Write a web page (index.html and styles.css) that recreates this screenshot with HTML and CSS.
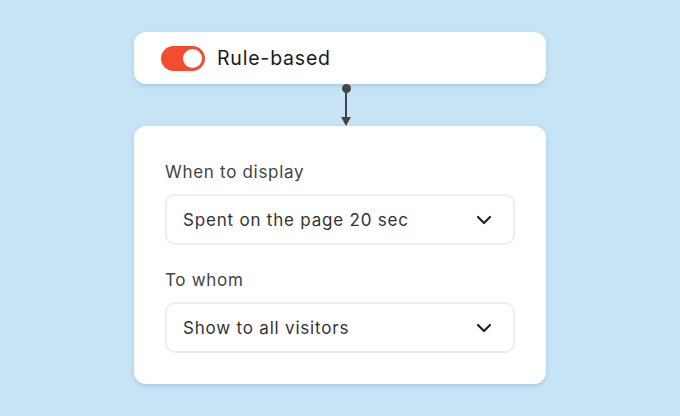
FILE: index.html
```html
<!DOCTYPE html>
<html>
<head>
<meta charset="utf-8">
<link rel="stylesheet" href="styles.css">
</head>
<body>
<div class="stage">
  <div class="card top">
    <span class="toggle"><span class="knob"></span></span>
    <span class="title">Rule-based</span>
  </div>
  <div class="connector">
    <span class="dot"></span>
    <span class="line"></span>
    <span class="head"></span>
  </div>
  <div class="card panel">
    <div class="label">When to display</div>
    <div class="select">
      <span>Spent on the page 20 sec</span>
      <svg class="chev" width="16" height="10" viewBox="0 0 16 10"><path d="M2 2 L8 8 L14 2" fill="none" stroke="#222" stroke-width="2.2" stroke-linecap="round" stroke-linejoin="round"/></svg>
    </div>
    <div class="label second">To whom</div>
    <div class="select">
      <span>Show to all visitors</span>
      <svg class="chev" width="16" height="10" viewBox="0 0 16 10"><path d="M2 2 L8 8 L14 2" fill="none" stroke="#222" stroke-width="2.2" stroke-linecap="round" stroke-linejoin="round"/></svg>
    </div>
  </div>
</div>
</body>
</html>
```
FILE: styles.css
```css
html, body { margin: 0; padding: 0; }
body {
  width: 680px;
  height: 416px;
  background: #c6e4f6;
  font-family: "Inter", "Noto Sans", sans-serif;
  overflow: hidden;
}
.stage {
  display: flex;
  flex-direction: column;
  align-items: center;
  padding-top: 32px;
}
.card {
  width: 412px;
  background: #fff;
  border-radius: 12px;
  box-shadow: 0 2px 4px rgba(80, 130, 170, 0.25);
  box-sizing: border-box;
}
.top {
  height: 52px;
  display: flex;
  align-items: center;
  padding-left: 27px;
}
.toggle {
  width: 44px;
  height: 25px;
  border-radius: 13px;
  background: #f24c31;
  position: relative;
  flex: none;
}
.knob {
  position: absolute;
  right: 3px;
  top: 3px;
  width: 19px;
  height: 19px;
  border-radius: 50%;
  background: #fff;
}
.title {
  margin-left: 12px;
  font-size: 19.5px;
  color: #1a1a1a;
  letter-spacing: 0.8px;
}
.connector {
  height: 42px;
  display: flex;
  flex-direction: column;
  align-items: center;
  margin-left: 12px;
}
.dot {
  width: 9px;
  height: 9px;
  border-radius: 50%;
  background: #444;
}
.line {
  width: 2px;
  flex: 1;
  background: #444;
}
.head {
  width: 0;
  height: 0;
  border-left: 5px solid transparent;
  border-right: 5px solid transparent;
  border-top: 9px solid #444;
}
.panel {
  height: 258px;
  padding: 36px 31px 0 31px;
}
.label {
  font-size: 17px;
  color: #444;
  line-height: 20px;
  margin-bottom: 12px;
  letter-spacing: 0.7px;
}
.label.second {
  margin-top: 25px;
}
.select {
  height: 51px;
  border: 2px solid #eeeeee;
  border-radius: 10px;
  box-sizing: border-box;
  display: flex;
  align-items: center;
  justify-content: space-between;
  padding: 0 21px 0 16px;
  font-size: 17px;
  color: #333;
  letter-spacing: 0.8px;
}
.chev { flex: none; }
```
